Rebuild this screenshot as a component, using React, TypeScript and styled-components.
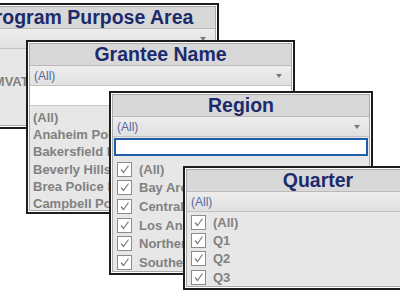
import React from 'react';
import styled, { createGlobalStyle } from 'styled-components';

const GlobalStyle = createGlobalStyle`
  html, body {
    margin: 0;
    padding: 0;
    background: #ffffff;
  }
  body {
    width: 400px;
    height: 293px;
    overflow: hidden;
    font-family: "Liberation Sans", Arial, sans-serif;
  }
`;

interface FilterCard {
  id: string;
  title: string;
  left: number;
  top: number;
  width: number;
  height: number;
  search?: 'plain' | 'focused';
  checks?: boolean;
  rowHeight: number;
  listTop: number;
  items: string[];
}

const Desk = styled.div`
  position: relative;
  width: 400px;
  height: 293px;
  overflow: hidden;
  background: #ffffff;
`;

// one filter window on the canvas
const Card = styled.div`
  position: absolute;
  box-sizing: border-box;
  display: flex;
  border: 2px solid #1c1c1c;
  padding: 1px;
  background: #ffffff;
`;

const Inner = styled.div`
  flex: 1;
  min-width: 0;
  display: flex;
  flex-direction: column;
  border: 1px solid #a9a9a9;
  background: #e7e7e7;
  overflow: hidden;
`;

const Header = styled.div`
  flex: none;
  height: 21px;
  display: flex;
  align-items: center;
  justify-content: center;
  background: #d8d8d8;
  border-bottom: 1px solid #bababa;
  color: #1c2b6c;
  font-size: 19.5px;
  font-weight: bold;
  white-space: nowrap;
`;

const Dropdown = styled.div`
  flex: none;
  height: 19px;
  display: flex;
  align-items: center;
  justify-content: space-between;
  padding: 0 9px 0 4px;
  background: linear-gradient(#ededed, #e0e0e0);
  border-bottom: 1px solid #c2c2c2;
  color: #56689e;
  font-size: 12px;
`;

const Arrow = styled.span`
  width: 0;
  height: 0;
  border-left: 3px solid transparent;
  border-right: 3px solid transparent;
  border-top: 4px solid #7a7a7a;
`;

const Search = styled.div<{ $focused?: boolean }>`
  flex: none;
  box-sizing: border-box;
  background: #ffffff;
  height: ${({ $focused }) => ($focused ? '18px' : '20px')};
  margin: ${({ $focused }) => ($focused ? '1px 1px 0' : '0')};
  border: ${({ $focused }) => ($focused ? '2px solid #1f5ca9' : 'none')};
  border-bottom: ${({ $focused }) => ($focused ? '2px solid #1f5ca9' : '1px solid #c8c8c8')};
`;

const List = styled.ul<{ $top: number }>`
  list-style: none;
  margin: 0;
  padding: ${({ $top }) => $top}px 0 0 3px;
  color: #818181;
  font-size: 13px;
  font-weight: bold;
`;

const Row = styled.li<{ $h: number }>`
  height: ${({ $h }) => $h}px;
  display: flex;
  align-items: center;
  gap: 7px;
  white-space: nowrap;
`;

const Box = styled.span`
  flex: none;
  box-sizing: border-box;
  width: 15px;
  height: 15px;
  margin-left: 1px;
  display: flex;
  align-items: center;
  justify-content: center;
  background: #ffffff;
  border: 1px solid #8c8c8c;
`;

const Check = () => (
  <svg width="11" height="11" viewBox="0 0 11 11">
    <polyline points="2,5.5 4.5,8.5 9.5,1.5" fill="none" stroke="#7b7b7b" strokeWidth="1.2" />
  </svg>
);

const cards: FilterCard[] = [
  {
    id: 'purpose',
    title: 'Program Purpose Area',
    left: -44,
    top: 3,
    width: 263,
    height: 126,
    rowHeight: 17,
    listTop: 7,
    items: ['(All)', 'CHP MVATP Grant', 'DUI', 'OTS'],
  },
  {
    id: 'grantee',
    title: 'Grantee Name',
    left: 26,
    top: 40,
    width: 269,
    height: 174,
    search: 'plain',
    rowHeight: 17.2,
    listTop: 3,
    items: ['(All)', 'Anaheim Police Department', 'Bakersfield Police Department', 'Beverly Hills Police Department', 'Brea Police Department', 'Campbell Police Department'],
  },
  {
    id: 'region',
    title: 'Region',
    left: 109,
    top: 91,
    width: 264,
    height: 184,
    search: 'focused',
    checks: true,
    rowHeight: 18.6,
    listTop: 4,
    items: ['(All)', 'Bay Area', 'Central', 'Los Angeles', 'Northern', 'Southern'],
  },
  {
    id: 'quarter',
    title: 'Quarter',
    left: 183,
    top: 166,
    width: 270,
    height: 124,
    checks: true,
    rowHeight: 18.3,
    listTop: 1,
    items: ['(All)', 'Q1', 'Q2', 'Q3', 'Q4'],
  },
];

const App = () => {
  return (
    <Desk>
      <GlobalStyle />
      {cards.map((card) => (
        <Card
          key={card.id}
          style={{ left: card.left, top: card.top, width: card.width, height: card.height }}
        >
          <Inner>
            <Header>{card.title}</Header>
            <Dropdown>
              <span>(All)</span>
              <Arrow />
            </Dropdown>
            {card.search && <Search $focused={card.search === 'focused'} />}
            <List $top={card.listTop}>
              {card.items.map((item) => (
                <Row key={item} $h={card.rowHeight}>
                  {card.checks && (
                    <Box>
                      <Check />
                    </Box>
                  )}
                  <span>{item}</span>
                </Row>
              ))}
            </List>
          </Inner>
        </Card>
      ))}
    </Desk>
  );
};

export default App;
